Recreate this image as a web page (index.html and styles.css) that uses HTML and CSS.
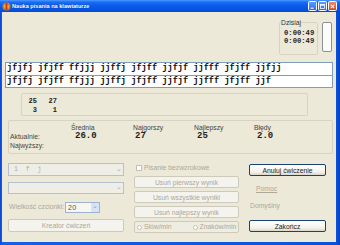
FILE: index.html
```html
<!DOCTYPE html>
<html lang="pl">
<head>
<meta charset="utf-8">
<title>Nauka pisania na klawiaturze</title>
<link rel="stylesheet" href="styles.css">
</head>
<body>
<div class="window">
  <div class="titlebar">
    <svg class="appicon" width="9" height="9" viewBox="0 0 9 9"><circle cx="4.5" cy="4.5" r="4" fill="#e8741c"/><circle cx="4.5" cy="4.5" r="2.3" fill="#f7c04a"/><rect x="3.5" y="1" width="2" height="7" fill="#c23a12"/></svg>
    <span class="title">Nauka pisania na klawiaturze</span>
    <div class="tbtns">
      <span class="tb"><svg width="9" height="9" viewBox="0 0 9 9"><rect x="2" y="6" width="4" height="1.4" fill="#fff"/></svg></span>
      <span class="tb"><svg width="9" height="9" viewBox="0 0 9 9"><rect x="2" y="2" width="5" height="5" fill="none" stroke="#fff" stroke-width="1"/><rect x="2" y="2" width="5" height="1.4" fill="#fff"/></svg></span>
      <span class="tb close"><svg width="9" height="9" viewBox="0 0 9 9"><path d="M2.3 2.3 L6.7 6.7 M6.7 2.3 L2.3 6.7" stroke="#fff" stroke-width="1.3"/></svg></span>
    </div>
  </div>
  <div class="client">
    <div class="toprow">
      <fieldset class="today">
        <legend>Dzisiaj</legend>
        <div class="time">0:00:49</div>
        <div class="time">0:00:49</div>
      </fieldset>
      <div class="vbar"></div>
    </div>
    <div class="lines">
      <div class="line">jfjfj jfjff ffjjj jjffj jfjff jjfjf jjfff jfjff jjfjj</div>
      <div class="line second">jfjfj jfjff ffjjj jjffj jfjff jjfjf jjfff jfjff jjf</div>
    </div>
    <div class="nums">
      <span>25</span><span>27</span>
      <span>3</span><span>1</span>
    </div>
    <div class="stats">
      <span></span><span class="hdr">Średnia</span><span class="hdr">Najgorszy</span><span class="hdr">Najlepszy</span><span class="hdr">Błędy</span>
      <span class="lbl">Aktualnie:</span><span class="val">26.0</span><span class="val">27</span><span class="val">25</span><span class="val">2.0</span>
      <span class="lbl">Najwyższy:</span><span></span><span></span><span></span><span></span>
    </div>
    <div class="controls">
      <div class="col left">
        <div class="combo dis c1"><span class="ctext">1 f j</span><span class="arrow">⌄</span></div>
        <div class="combo dis c2"><span class="ctext"></span><span class="arrow">⌄</span></div>
        <div class="sizerow"><span class="dtext">Wielkość czcionki:</span><div class="combo small"><span class="ctext">20</span><span class="arrow blue">⌄</span></div></div>
        <div class="btn dis kreator">Kreator ćwiczeń</div>
      </div>
      <div class="col mid">
        <div class="chkrow"><span class="chk"></span><span class="dtext">Pisanie bezwzrokowe</span></div>
        <div class="btn dis">Usuń pierwszy wynik</div>
        <div class="btn dis">Usuń wszystkie wyniki</div>
        <div class="btn dis">Usuń najlepszy wynik</div>
        <div class="radios"><span class="radio"></span><span class="dtext">Słów/min</span><span class="radio r2"></span><span class="dtext">Znaków/min</span></div>
      </div>
      <div class="col right">
        <div class="btn on anuluj">Anuluj ćwiczenie</div>
        <div class="link">Pomoc</div>
        <div class="dtext def">Domyślny</div>
        <div class="btn on zak">Zakończ</div>
      </div>
    </div>
  </div>
</div>
</body>
</html>
```
FILE: styles.css
```css
* { box-sizing: border-box; }
html, body { margin: 0; padding: 0; }
body {
  width: 340px; height: 245px; overflow: hidden;
  font-family: "Liberation Sans", Arial, sans-serif;
  font-size: 6.8px; color: #3a3a3a;
  background: #0a4fd8;
}
.window {
  width: 340px; height: 245px;
  display: flex; flex-direction: column;
  background: linear-gradient(90deg, #0a46d0 0, #1560e8 2px, #0a52dc 336px, #0842c4 340px);
}
.titlebar {
  height: 12px; display: flex; align-items: center;
  background: linear-gradient(#4f9bff 0, #1a6ef5 2px, #0a5ae8 6px, #0552e0 10px, #0848cc 12px);
  padding-left: 2px;
}
.appicon { flex: none; }
.title {
  color: #fff; font-weight: bold; font-size: 5.6px; margin-left: 1px;
  text-shadow: 0 0 1px #0a2a80;
  flex: 1;
}
.tbtns { display: flex; gap: 1px; margin-right: 3px; margin-top: 0; }
.tb {
  width: 9px; height: 10px; border: 1px solid #fff; border-radius: 1.5px;
  background: linear-gradient(#5a9cff, #2a6ef0);
  display: flex; align-items: center; justify-content: center;
}
.tb.close { background: linear-gradient(#f08a6a, #d9451c); }
.client {
  flex: 1; margin: 0 4px 3px 2px; background: #ece9d8;
  display: flex; flex-direction: column; padding-top: 7px;
}
.toprow { display: flex; justify-content: flex-end; gap: 4px; padding-right: 4px; height: 36px; }
.today {
  width: 39px; height: 36px; margin: 0; padding: 0 0 0 4px;
  border: 1px solid #d6d3c4; border-radius: 2px;
}
.today legend {
  padding: 0; margin-left: -3px; font-size: 6.8px; color: #333; line-height: 7px;
}
.time {
  font-family: "Liberation Mono", "Courier New", monospace; font-weight: bold;
  font-size: 7.2px; line-height: 8px; color: #222; margin-left: 0px;
}
.time:first-of-type { margin-top: 3px; }
.vbar {
  width: 10px; height: 30px; margin-top: 3px;
  background: #fbfbf9; border: 1px solid #8a8f9a; border-radius: 2px;
}
.lines {
  margin: 7px 3px 0 3px; border: 1px solid #7f9db9; background: #fff;
}
.line {
  height: 12px; line-height: 11px; padding-left: 1px;
  font-family: "Liberation Mono", "Courier New", monospace; font-weight: bold;
  font-size: 8.65px; color: #111; white-space: nowrap; overflow: hidden;
}
.line.second { border-top: 1px solid #7f9db9; height: 12px; }
.nums {
  margin: 5px 0 0 19px; width: 287px; height: 23px;
  border: 1px solid #d6d3c4; border-radius: 2px;
  display: grid; grid-template-columns: 10px 10px; column-gap: 10px;
  padding: 3px 0 0 5px; align-content: start;
  font-family: "Liberation Mono", "Courier New", monospace; font-weight: bold; font-size: 7px;
  line-height: 9px; color: #222;
}
.nums span { text-align: right; }
.stats {
  margin: 4px 3px 0 6px; height: 34px;
  border: 1px solid #d6d3c4; border-radius: 2px;
  display: grid; grid-template-columns: 61px 62px 61px 60px 1fr;
  grid-template-rows: 9px 9px 9px; padding: 2px 0 0 1px;
}
.hdr { line-height: 9px; color: #444; }
.lbl { line-height: 9px; color: #444; }
.val {
  font-family: "Liberation Mono", "Courier New", monospace; font-weight: bold;
  font-size: 9px; line-height: 9px; color: #222; padding-left: 4px;
}
.stats .val:nth-child(8) { padding-left: 2px; }
.stats .val:nth-child(9) { padding-left: 3px; }
.stats .val:nth-child(10) { padding-left: 3px; }
.controls {
  margin-top: 9px; display: grid;
  grid-template-columns: 116px 105px 77px; column-gap: 10px; padding-left: 6px;
}
.col { display: flex; flex-direction: column; }
.combo {
  display: flex; align-items: center; justify-content: space-between;
  border: 1px solid #b3c2d3; background: #eeede6; height: 13px;
}
.combo.c2 { margin-top: 6px; height: 12px; }
.ctext {
  font-family: "Liberation Mono", monospace; color: #b0ad9f; font-size: 6.5px;
  padding-left: 5px; letter-spacing: 2px;
}
.arrow {
  width: 9px; height: 100%; display: flex; align-items: center; justify-content: center;
  color: #aab; font-size: 7px; line-height: 6px; padding-bottom: 2px;
}
.sizerow { display: flex; align-items: center; margin-top: 8px; height: 10px; }
.sizerow .dtext { width: 57px; padding-left: 1px; }
.combo.small { width: 35px; height: 11px; background: #f6f6f2; border-color: #9fb3cc; }
.combo.small .ctext { color: #555; font-family: "Liberation Sans", sans-serif; font-size: 7px; letter-spacing: 0.3px; padding-left: 2px; }
.arrow.blue { background: #d8e2f4; color: #8899bb; width: 8px; }
.dtext { color: #aca899; line-height: 8px; white-space: nowrap; }
.btn {
  height: 12px; display: flex; align-items: center; justify-content: center;
  border-radius: 2px; white-space: nowrap;
}
.btn.dis { border: 1px solid #cdcabb; background: #f4f3ee; color: #aca899; }
.btn.on {
  border: 1px solid #1c3f78; color: #1a1a1a;
  background: linear-gradient(#ffffff, #f3f2ec 70%, #d8d5c8);
}
.kreator { margin-top: 7px; height: 13px; }
.chkrow { display: flex; align-items: center; height: 10px; padding-left: 2px; gap: 2px; }
.chk { width: 6px; height: 6px; border: 1px solid #c4c2b5; background: #fff; }
.mid .btn { margin-top: 3px; }
.mid .btn:nth-child(2) { margin-top: 3px; }
.radios {
  margin-top: 3px; height: 12px; border: 1px solid #cdcabb; border-radius: 2px;
  display: flex; align-items: center; padding-left: 2px; background: #efede2;
}
.radio { width: 5px; height: 5px; border: 1px solid #c4c2b5; border-radius: 50%; background: #fff; margin-right: 2px; }
.radio.r2 { margin-left: 21px; }
.anuluj { margin-top: 1px; }
.link { color: #aca899; text-decoration: underline; margin-top: 8px; padding-left: 7px; line-height: 9px; }
.def { margin-top: 9px; padding-left: 1px; }
.zak { margin-top: 10px; }
```
